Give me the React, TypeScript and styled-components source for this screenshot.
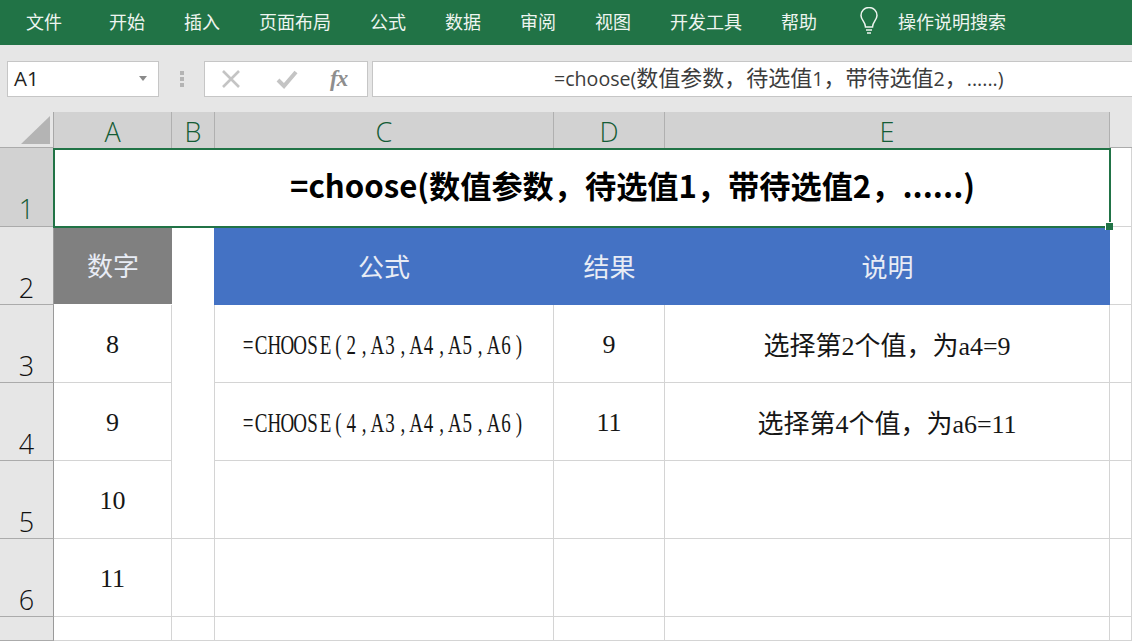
import React from "react";
import styled, { createGlobalStyle } from "styled-components";

const Global = createGlobalStyle`
  html, body { margin: 0; padding: 0; width: 1132px; height: 641px; overflow: hidden; background: #fff; }
  * { box-sizing: border-box; }
`;
const CJK = `"Noto Sans CJK SC", "Noto Sans", sans-serif`;
const UI = `"Open Sans", "Noto Sans CJK SC", sans-serif`;
const SERIF = `"Liberation Serif", "Noto Sans CJK SC", serif`;

const Page = styled.div`width:1132px;height:641px;display:flex;flex-direction:column;overflow:hidden;`;
const Ribbon = styled.nav`height:45px;background:#217346;display:flex;align-items:center;padding:0 0 3px 26px;color:#eef5f0;font:400 18px ${CJK};flex:none;`;
const Tab = styled.span<{ $w: number }>`width:${p => p.$w}px;flex:none;white-space:nowrap;`;
const Tell = styled.span`display:flex;align-items:center;gap:18px;margin-left:2px;`;
const Bar = styled.div`height:67px;background:#e6e6e6;display:flex;align-items:flex-start;padding:16px 0 0 7px;flex:none;`;
const NameBox = styled.div`width:152px;height:36px;background:#fff;border:1px solid #c6c6c6;display:flex;align-items:center;justify-content:space-between;padding:0 11px 2px 6px;font:400 20.5px ${UI};color:#222;`;
const Caret = styled.i`width:0;height:0;border:4px solid transparent;border-top:5px solid #8a8a8a;border-bottom:0;`;
const Grip = styled.div`width:45px;display:flex;flex-direction:column;align-items:center;gap:2px;padding-top:10px;height:36px;flex:none;`;
const GripDot = styled.i`width:4px;height:4px;background:#b4b4b4;`;
const FxBox = styled.div`width:164px;height:36px;background:#fff;border:1px solid #c6c6c6;display:flex;align-items:center;flex:none;padding-left:15px;margin-right:4px;`;
const FxIcon = styled.span`width:55px;display:flex;align-items:center;`;
const FxText = styled.span`font:italic 700 23px "Liberation Serif",serif;color:#8e8e8e;letter-spacing:-1px;margin-top:-1px;`;
const FormulaInput = styled.div`flex:1;height:36px;background:#fff;border:1px solid #c6c6c6;border-right:0;font:400 19.6px/28px ${UI};color:#3c3c3c;padding:0 0 0 181px;white-space:nowrap;overflow:hidden;`;
const BarCjk = styled.span`font:400 22px/28px ${CJK};`;
const Sheet = styled.div`
  flex:1;display:grid;background:#fff;
  grid-template-columns:54px 118px 43px 339px 111px 445px 22px;
  grid-template-rows:36px 79px 78px 78px 78px 78px 78px 24px;
`;
const Corner = styled.div`background:#e6e6e6;border-right:1px solid #a8a8a8;position:relative;overflow:hidden;border-bottom:1px solid #ababab;`;
const CornerMark = styled.svg`display:block;position:absolute;left:0;top:0;`;
const ColHead = styled.div`background:#d2d2d2;border-right:1px solid #b0b0b0;color:#145c35;font:300 27px ${UI};display:flex;justify-content:center;align-items:center;padding-top:3px;line-height:1;`;
const Filler = styled.div`background:#e6e6e6;border-bottom:1px solid #ababab;`;
const RowHead = styled.div<{ $on?: boolean }>`background:${p => p.$on ? "#d2d2d2" : "#e6e6e6"};color:${p => p.$on ? "#145c35" : "#111"};border-right:1px solid #9a9a9a;border-bottom:1px solid #ababab;font:300 27px ${UI};display:flex;justify-content:center;align-items:flex-end;line-height:1;padding-bottom:${p => p.$on ? 4 : 3}px;`;
const Title = styled.div`grid-column:2 / 7;position:relative;background:#fff;border:2px solid #217346;margin:0 -1px -1px -1px;display:flex;align-items:center;color:#000;font:700 31.2px ${CJK};padding:0 0 7px 235px;white-space:nowrap;z-index:2;`;
const Handle = styled.i`position:absolute;right:-4px;bottom:-4px;width:7px;height:7px;background:#217346;border:1px solid #fff;border-width:1px 0 0 1px;box-sizing:content-box;`;
const Cell = styled.div`
  background:#fff;color:#161616;
  border-right:1px solid #d4d4d4;border-bottom:1px solid #d4d4d4;
  display:flex;align-items:center;justify-content:center;white-space:nowrap;
  font:400 26px ${SERIF};
`;
const NumCell = styled(Cell)`padding-top:2px;`;
const HeadCell = styled.div`
  display:flex;align-items:center;justify-content:center;white-space:nowrap;
  color:#e8ecf5;font:400 26px ${CJK};padding-bottom:2px;
`;
const GreyHead = styled(HeadCell)`background:#808080;margin-bottom:1px;`;
const BlueHead = styled(HeadCell)`background:#4472c4;`;
const FirstBlueHead = styled(BlueHead)`margin-left:-1px;position:relative;`;
const SpacerCell = styled(Cell)`grid-row:3 / 7;grid-column:3;`;
const FormulaText = styled.span`display:flex;font:400 19px "Liberation Serif",serif;transform:scaleY(1.42);color:#161616;margin:0 1px 0 0;`;
const Ch = styled.span`display:block;width:12.9px;text-align:center;`;

const Fixed = ({ text }: { text: string }) => (
  <FormulaText>{Array.from(text).map((c, i) => <Ch key={i}>{c}</Ch>)}</FormulaText>
);

const X = () => (<svg width="22" height="22" viewBox="0 0 22 22"><path d="M3 3 L19 19 M19 3 L3 19" stroke="#c4c4c4" strokeWidth="2.6" fill="none"/></svg>);
const Check = () => (<svg width="24" height="22" viewBox="0 0 24 22"><path d="M3 12 L9 18 L21 4" stroke="#c4c4c4" strokeWidth="4" fill="none"/></svg>);
const Bulb = () => (<svg width="22" height="28" viewBox="0 0 22 28" fill="none" stroke="#eef5f0" strokeWidth="1.5"><path d="M7.500 20 C7.500 15 3 13 3 8.500 A8 8 0 0 1 19 8.500 C19 13 14.500 15 14.500 20 Z"/><path d="M8 23 H14 M9 26 H13"/></svg>);

const tabs: [string, number][] = [["文件",83],["开始",75],["插入",75],["页面布局",111],["公式",75],["数据",75],["审阅",75],["视图",75],["开发工具",111],["帮助",75]];

export default function App() {
  return (
    <Page>
      <Global />
      <Ribbon>
        {tabs.map(([t, w]) => <Tab key={t} $w={w}>{t}</Tab>)}
        <Tell><Bulb />操作说明搜索</Tell>
      </Ribbon>
      <Bar>
        <NameBox>A1<Caret /></NameBox>
        <Grip><GripDot /><GripDot /><GripDot /></Grip>
        <FxBox>
          <FxIcon><X /></FxIcon>
          <FxIcon><Check /></FxIcon>
          <FxText>fx</FxText>
        </FxBox>
        <FormulaInput>=choose(<BarCjk>数值参数，待选值</BarCjk>1<BarCjk>，带待选值</BarCjk>2<BarCjk>，</BarCjk>......)</FormulaInput>
      </Bar>
      <Sheet>
        <Corner><CornerMark width="54" height="36"><path d="M21 32 L50 32 L50 4 Z" fill="#b4b4b4"/></CornerMark></Corner>
        {["A","B","C","D","E"].map(c => <ColHead key={c}>{c}</ColHead>)}
        <Filler />
        <RowHead $on>1</RowHead>
        <Title>=choose(数值参数，待选值1，带待选值2，......)<Handle /></Title>
        <Cell />
        <RowHead>2</RowHead>
        <GreyHead>数字</GreyHead>
        <SpacerCell />
        <FirstBlueHead>公式</FirstBlueHead>
        <BlueHead>结果</BlueHead>
        <BlueHead>说明</BlueHead>
        <Cell />
        <RowHead>3</RowHead>
        <NumCell>8</NumCell>
        <NumCell><Fixed text="=CHOOSE(2,A3,A4,A5,A6)" /></NumCell>
        <NumCell>9</NumCell>
        <Cell>选择第2个值，为a4=9</Cell>
        <Cell />
        <RowHead>4</RowHead>
        <NumCell>9</NumCell>
        <NumCell><Fixed text="=CHOOSE(4,A3,A4,A5,A6)" /></NumCell>
        <NumCell>11</NumCell>
        <Cell>选择第4个值，为a6=11</Cell>
        <Cell />
        <RowHead>5</RowHead>
        <NumCell>10</NumCell><Cell /><Cell /><Cell /><Cell />
        <RowHead>6</RowHead>
        <NumCell>11</NumCell><Cell /><Cell /><Cell /><Cell /><Cell />
        <RowHead />
        <Cell /><Cell /><Cell /><Cell /><Cell /><Cell />
      </Sheet>
    </Page>
  );
}
